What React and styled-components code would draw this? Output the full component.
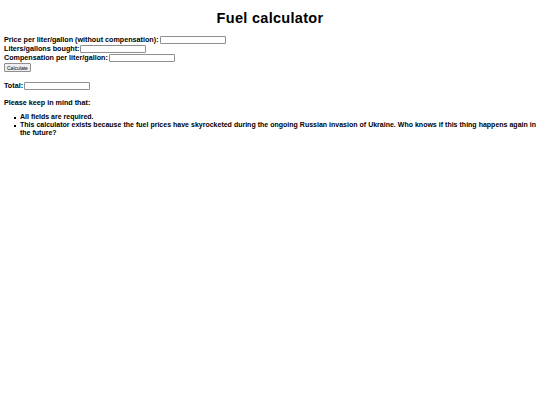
import React from 'react'
import styled, { createGlobalStyle } from 'styled-components'

const Global = createGlobalStyle`
  html, body {
    margin: 0;
    background: #fff;
  }
  body {
    padding: 4px;
    font-family: "Liberation Sans", Arial, sans-serif;
    font-weight: bold;
    font-size: 7.2px;
    color: #000;
  }
`

const Title = styled.h1`
  text-align: center;
  font-size: 14.5px;
  margin: 6px 0 9px;
  letter-spacing: 0.3px;
`

const Form = styled.form`
  display: flex;
  flex-direction: column;
  align-items: flex-start;
`

const Row = styled.div`
  display: flex;
  align-items: center;
  gap: 1px;
  height: 9px;
`

const Input = styled.input`
  width: ${p => p.$w || 66}px;
  height: 8px;
  box-sizing: border-box;
  border: 1px solid #8f8f8f;
  border-radius: 1px;
  padding: 0;
  margin: 0;
  font-size: 6px;
`

const Button = styled.button`
  font-family: "Liberation Sans", Arial, sans-serif;
  font-size: 5px;
  font-weight: normal;
  height: 9px;
  padding: 0 2px;
  margin-top: 1px;
  border: 1px solid #8f8f8f;
  border-radius: 1px;
  background: #efefef;
  color: #000;
`

const Para = styled.div`
  display: flex;
  align-items: center;
  gap: 1px;
  margin-top: ${p => p.$top || 8}px;
`

const List = styled.ul`
  margin: 6px 0 0;
  padding-left: 16px;
  list-style: none;
  font-size: 7px;
  line-height: 8px;
  text-align: justify;
`

const Item = styled.li`
  position: relative;

  &::before {
    content: '';
    position: absolute;
    left: -6px;
    top: 4px;
    width: 1.6px;
    height: 1.6px;
    background: #000;
  }
`

export default function App() {
  return (
    <>
      <Global />
      <Title>Fuel calculator</Title>
      <Form onSubmit={e => e.preventDefault()}>
        <Row>Price per liter/gallon (without compensation): <Input /></Row>
        <Row>Liters/gallons bought: <Input /></Row>
        <Row>Compensation per liter/gallon: <Input /></Row>
        <Button type="submit">Calculate</Button>
      </Form>
      <Para $top={9}>Total: <Input readOnly /></Para>
      <Para $top={8}>Please keep in mind that:</Para>
      <List>
        <Item>All fields are required.</Item>
        <Item>
          This calculator exists because the fuel prices have skyrocketed during the ongoing Russian
          invasion of Ukraine. Who knows if this thing happens again in the future?
        </Item>
      </List>
    </>
  )
}
